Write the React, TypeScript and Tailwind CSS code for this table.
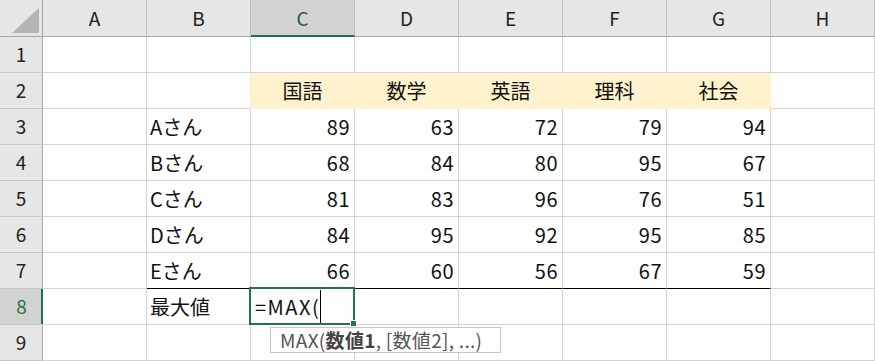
const cols = ["A", "B", "C", "D", "E", "F", "G", "H"];
const subjects = ["国語", "数学", "英語", "理科", "社会"];
const people: [string, number[]][] = [
  ["Aさん", [89, 63, 72, 79, 94]],
  ["Bさん", [68, 84, 80, 95, 67]],
  ["Cさん", [81, 83, 96, 76, 51]],
  ["Dさん", [84, 95, 92, 95, 85]],
  ["Eさん", [66, 60, 56, 67, 59]],
];

const cell = "border-r border-b border-[#d4d4d4] flex items-center text-[20px] text-[#111]";

function RowHead({ n, active }: { n: number; active?: boolean }) {
  return active ? (
    <div className="relative flex items-center justify-center border-b border-[#c8c8c8] bg-[#d2d2d2] text-[19px] text-[#217346]">
      {n}
      <div className="absolute right-0 top-0 h-full w-[2px] bg-[#217346]" />
    </div>
  ) : (
    <div className="flex items-center justify-center border-r border-b border-r-[#a6a6a6] border-b-[#c8c8c8] bg-[#e6e6e6] text-[19px] text-[#222]">
      {n}
    </div>
  );
}

export default function App() {
  return (
    <div className="relative h-[361px] w-[875px] overflow-hidden bg-white font-['Noto_Sans_CJK_JP','Noto_Sans',sans-serif]">
      <div className="grid grid-cols-[43px_repeat(8,104px)] grid-rows-[37px_repeat(9,36px)]">
        {/* corner */}
        <div className="relative border-r border-b border-[#a6a6a6] bg-[#e6e6e6]">
          <svg className="absolute left-[12px] top-[8px]" width="27" height="25" viewBox="0 0 27 25">
            <polygon points="27,0 27,25 0,25" fill="#b4b4b4" />
          </svg>
        </div>
        {cols.map((c) =>
          c === "C" ? (
            <div
              key={c}
              className="flex items-center justify-center border-r border-b-2 border-r-[#bdbdbd] border-b-[#217346] bg-[#d2d2d2] pt-[2px] text-[19px] text-[#1e5c3a]"
            >
              {c}
            </div>
          ) : (
            <div
              key={c}
              className="flex items-center justify-center border-r border-b border-r-[#bdbdbd] border-b-[#a6a6a6] bg-[#e6e6e6] text-[19px] text-[#222]"
            >
              {c}
            </div>
          )
        )}

        {/* row 1 */}
        <RowHead n={1} />
        {cols.map((c) => (
          <div key={c} className={cell} />
        ))}

        {/* row 2 */}
        <RowHead n={2} />
        <div className={cell} />
        <div className={cell + " border-r-[#fff2cc]"} />
        {subjects.map((s) => (
          <div key={s} className={cell + " justify-center border-[#fff2cc] bg-[#fff2cc]"}>
            {s}
          </div>
        ))}
        <div className={cell} />

        {/* rows 3-7 */}
        {people.map(([name, scores], i) => (
          <div key={name} className="contents">
            <RowHead n={i + 3} />
            <div className={cell} />
            <div className={cell + " pl-[3px]" + (i === 4 ? " border-b-black" : "")}>{name}</div>
            {scores.map((v, j) => (
              <div
                key={j}
                className={cell + " justify-end pr-[4px] tracking-[0.5px]" + (i === 4 ? " border-b-black" : "")}
              >
                {v}
              </div>
            ))}
            <div className={cell} />
          </div>
        ))}

        {/* row 8 */}
        <RowHead n={8} active />
        <div className={cell} />
        <div className={cell + " pl-[3px]"}>最大値</div>
        <div className={cell + " relative pl-[4px]"}>
          <span className="tracking-[1.5px]">=MAX(</span>
          <span className="inline-block h-[33px] w-px bg-black" />
          <div className="absolute -left-[2px] -top-[2px] h-[38px] w-[106px] border-2 border-[#217346]" />
          <div className="absolute -bottom-[3px] -right-[3px] h-[7px] w-[7px] border border-white bg-[#217346]" />
        </div>
        {cols.slice(3).map((c) => (
          <div key={c} className={cell} />
        ))}

        {/* row 9 */}
        <RowHead n={9} />
        {cols.map((c) => (
          <div key={c} className={cell} />
        ))}
      </div>

      {/* function tooltip */}
      <div className="absolute left-[270px] top-[327px] flex h-[26px] w-[231px] items-center border border-[#c6c6c6] bg-white pl-[9px] text-[19px] tracking-[0.3px] text-[#555]">
        MAX(<b className="font-bold text-[#444]">数値1</b>, [数値2], ...)
      </div>
    </div>
  );
}
